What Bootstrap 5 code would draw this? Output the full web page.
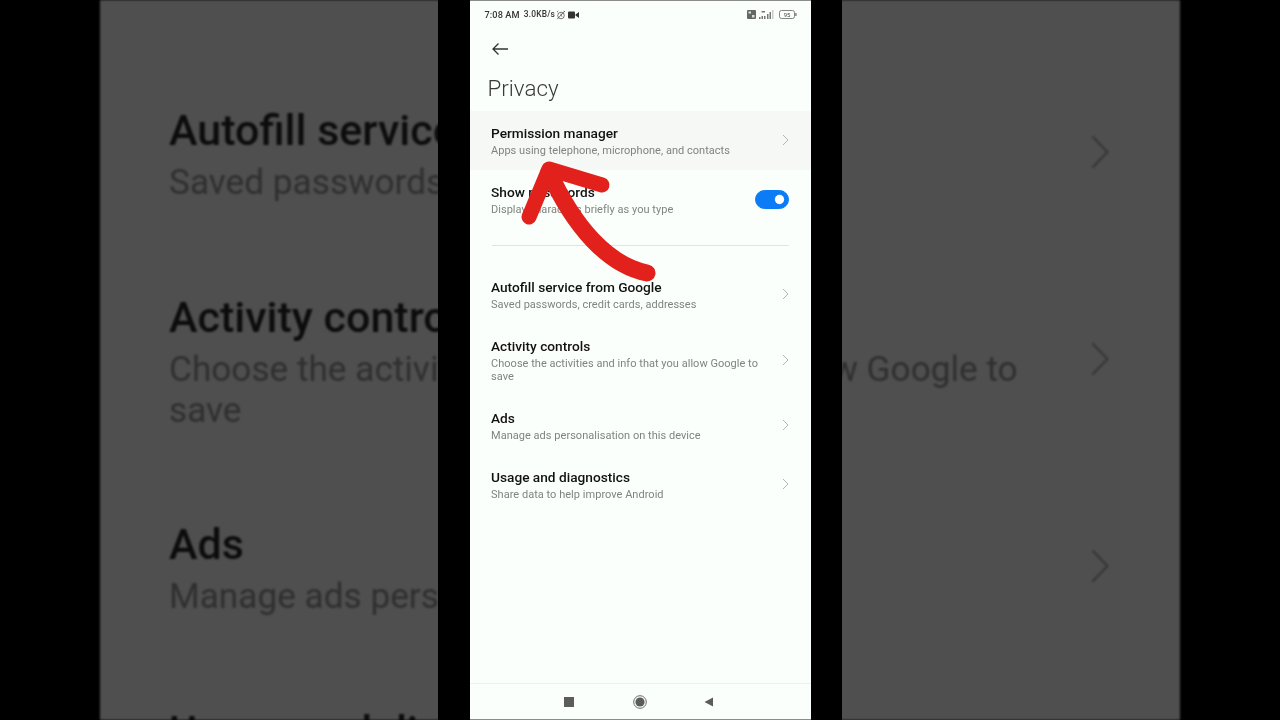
<!DOCTYPE html>
<html lang="en">
<head>
<meta charset="utf-8">
<title>Privacy</title>
<link href="https://cdn.jsdelivr.net/npm/bootstrap@5.3.0/dist/css/bootstrap.min.css" rel="stylesheet">
<style>
html,body{height:100%;margin:0;background:#000;overflow:hidden}
body{font-family:Roboto,"Liberation Sans",sans-serif}
.stage{position:relative;width:1280px;height:720px;background:#000;overflow:hidden}
.backdrop{margin:0 100px;height:720px;background:#4f4f4f;padding-top:60px;overflow:hidden;filter:blur(1px)}
.bd-row{padding:0 71px 0 69px}
.bd-row.one{height:187px}
.bd-row.two{height:227px}
.bd-text{width:860px;padding-top:43px}
.bd-title{font-size:43px;line-height:54px;font-weight:500;color:#0c0c0c}
.bd-sub{font-size:35.2px;line-height:41px;color:#2f2f2f;margin-top:5px}
.bd-chev{width:18px;height:34px;flex:none;color:#333;margin-bottom:4px}
.band{position:absolute;top:0;bottom:0;left:438px;width:404px;background:#000}
.phone{width:341px;height:720px;background:#fbfffb;border-top:1px solid #8c8c8c;border-bottom:1px solid #8c8c8c;position:relative;overflow:hidden;filter:blur(.3px)}
.statusline{height:27px;padding:0 14px 0 15px;color:#333}
.st-time{font-size:9.2px;font-weight:500;letter-spacing:.1px}
.st-speed{font-size:8.4px;font-weight:500;margin-left:4px;letter-spacing:.2px}
.st-alarm{margin-left:1px}
.st-cam{margin-left:2px}
.st-sig{margin-left:3px}
.backbar{height:41px;padding-left:21px}
.pagehead{font-size:22.4px;font-weight:300;color:#3a3a3a;line-height:28px;padding-left:18px;height:42px;margin:0;padding-top:5px}
.setlist{--bs-list-group-bg:transparent;--bs-list-group-border-width:0;border-radius:0}
.setrow{height:59px;padding:13px 22px 0 21.500px;background:transparent;color:#111}
.setrow.tall{height:72px}
.setrow.hi{background:#f5f8f5}
.set-title{font-size:13.700px;line-height:18px;font-weight:500;color:#111}
.set-sub{font-size:11px;line-height:13px;color:#808480;margin-top:2px;letter-spacing:.03px}
.set-main{width:272px}
.chev{width:7px;height:12px;flex:none;color:#b4b8b4;margin-top:10px}
.setrow.tall .chev{margin-top:17px}
.sep{height:36px;padding:16px 22px 0}
.sep hr{margin:0;border-color:#e0e4e0;opacity:1}
.navline{margin-top:auto;height:36px;border-top:1px solid #eef1ee;gap:59px}
.nav-back{margin-left:-2px;margin-right:2px}
.phone-col{height:100%}
.form-switch .toggle-in{width:34px;height:19px;margin:7px 0 0;float:none;background-color:#0b7cf5;border-color:#0b7cf5;box-shadow:none;background-image:url("data:image/svg+xml,%3csvg xmlns='http://www.w3.org/2000/svg' viewBox='-4 -4 8 8'%3e%3ccircle r='2.2' fill='%23fff'/%3e%3c/svg%3e")}
.form-switch.tog{padding:0;min-height:0;margin:0}
.arrowmark{position:absolute;left:0;top:0;width:341px;height:720px;pointer-events:none}
</style>
</head>
<body>
<main class="stage">
  <section class="backdrop" aria-hidden="true">
    <div class="bd-row one d-flex justify-content-between align-items-center">
      <div class="bd-text align-self-start"><div class="bd-title">Autofill service from Google</div><div class="bd-sub">Saved passwords, credit cards, addresses</div></div>
      <svg class="bd-chev" viewBox="0 0 18 34"><path d="M1.500 1.500 16.500 17 1.500 32.500" fill="none" stroke="currentColor" stroke-width="1.800"/></svg>
    </div>
    <div class="bd-row two d-flex justify-content-between align-items-center">
      <div class="bd-text align-self-start"><div class="bd-title">Activity controls</div><div class="bd-sub">Choose the activities and info that you allow Google to save</div></div>
      <svg class="bd-chev" viewBox="0 0 18 34"><path d="M1.500 1.500 16.500 17 1.500 32.500" fill="none" stroke="currentColor" stroke-width="1.800"/></svg>
    </div>
    <div class="bd-row one d-flex justify-content-between align-items-center">
      <div class="bd-text align-self-start"><div class="bd-title">Ads</div><div class="bd-sub">Manage ads personalisation on this device</div></div>
      <svg class="bd-chev" viewBox="0 0 18 34"><path d="M1.500 1.500 16.500 17 1.500 32.500" fill="none" stroke="currentColor" stroke-width="1.800"/></svg>
    </div>
    <div class="bd-row one d-flex justify-content-between align-items-center">
      <div class="bd-text align-self-start"><div class="bd-title">Usage and diagnostics</div><div class="bd-sub">Share data to help improve Android</div></div>
      <svg class="bd-chev" viewBox="0 0 18 34"><path d="M1.500 1.500 16.500 17 1.500 32.500" fill="none" stroke="currentColor" stroke-width="1.800"/></svg>
    </div>
  </section>
  <div class="band d-flex justify-content-center">
    <div class="phone">
      <div class="phone-col d-flex flex-column">
        <div class="statusline d-flex align-items-center">
          <span class="st-time">7:08 AM</span>
          <span class="st-speed">3.0KB/s</span>
          <svg class="st-alarm" width="10" height="10" viewBox="0 0 10 10" fill="none" stroke="#555" stroke-width=".8"><circle cx="5" cy="5.500" r="3.300"/><path d="M5 3.500v2l1.300.8M1 2 2.300 1M9 2 7.700 1M1.200 9.200 8.800 1"/></svg>
          <svg class="st-cam" width="11" height="8" viewBox="0 0 11 8"><rect x="0" y="0.500" width="7" height="7" rx="1" fill="#333"/><path d="M7.500 3.500 11 1v6L7.500 4.500z" fill="#333"/></svg>
          <svg class="ms-auto" width="9" height="9" viewBox="0 0 9 9"><rect width="9" height="9" rx="1" fill="#666"/><rect x="1.500" y="1.500" width="2.500" height="2" fill="#ddd"/><rect x="5" y="5" width="2.500" height="2.500" fill="#ddd"/></svg>
          <svg class="st-sig" width="16" height="9" viewBox="0 0 16 9"><g fill="#777"><rect x="0" y="7" width="1.500" height="2"/><rect x="2.500" y="6" width="1.500" height="3"/><rect x="5" y="6" width="1.500" height="3"/><rect x="8" y="4" width="1.500" height="5"/><rect x="10.500" y="2" width="1.500" height="7"/><rect x="13" y="0" width="1.500" height="9" fill="#ccc"/><rect x="2.500" y="1" width="3.500" height="1.500"/></g></svg>
          <svg class="ms-1" width="18" height="9" viewBox="0 0 18 9"><rect x=".5" y=".5" width="15" height="8" rx="2" fill="none" stroke="#666" stroke-width=".8"/><rect x="16.300" y="3" width="1.200" height="3" fill="#666"/><text x="8" y="6.700" font-size="6" text-anchor="middle" fill="#444" font-family="Roboto,sans-serif">95</text></svg>
        </div>
        <div class="backbar d-flex align-items-center">
          <svg width="18" height="14" viewBox="0 0 18 14" fill="none" stroke="#333" stroke-width="1.300"><path d="M17 7H2M7.500 1.500 2 7l5.500 5.500"/></svg>
        </div>
        <h1 class="pagehead">Privacy</h1>
        <div class="list-group list-group-flush setlist">
          <a class="list-group-item setrow hi d-flex justify-content-between" href="#">
            <div class="set-main"><div class="set-title">Permission manager</div><div class="set-sub">Apps using telephone, microphone, and contacts</div></div>
            <svg class="chev" viewBox="0 0 7 12"><path d="M1 1l5 5-5 5" fill="none" stroke="currentColor" stroke-width="1"/></svg>
          </a>
          <div class="list-group-item setrow d-flex justify-content-between">
            <div class="set-main"><div class="set-title">Show passwords</div><div class="set-sub">Display characters briefly as you type</div></div>
            <div class="form-check form-switch tog"><input class="form-check-input toggle-in" type="checkbox" role="switch" checked aria-label="Show passwords"></div>
          </div>
        </div>
        <div class="sep"><hr></div>
        <div class="list-group list-group-flush setlist">
          <a class="list-group-item setrow d-flex justify-content-between" href="#">
            <div class="set-main"><div class="set-title">Autofill service from Google</div><div class="set-sub">Saved passwords, credit cards, addresses</div></div>
            <svg class="chev" viewBox="0 0 7 12"><path d="M1 1l5 5-5 5" fill="none" stroke="currentColor" stroke-width="1"/></svg>
          </a>
          <a class="list-group-item setrow tall d-flex justify-content-between" href="#">
            <div class="set-main"><div class="set-title">Activity controls</div><div class="set-sub">Choose the activities and info that you allow Google to save</div></div>
            <svg class="chev" viewBox="0 0 7 12"><path d="M1 1l5 5-5 5" fill="none" stroke="currentColor" stroke-width="1"/></svg>
          </a>
          <a class="list-group-item setrow d-flex justify-content-between" href="#">
            <div class="set-main"><div class="set-title">Ads</div><div class="set-sub">Manage ads personalisation on this device</div></div>
            <svg class="chev" viewBox="0 0 7 12"><path d="M1 1l5 5-5 5" fill="none" stroke="currentColor" stroke-width="1"/></svg>
          </a>
          <a class="list-group-item setrow d-flex justify-content-between" href="#">
            <div class="set-main"><div class="set-title">Usage and diagnostics</div><div class="set-sub">Share data to help improve Android</div></div>
            <svg class="chev" viewBox="0 0 7 12"><path d="M1 1l5 5-5 5" fill="none" stroke="currentColor" stroke-width="1"/></svg>
          </a>
        </div>
        <nav class="navline d-flex align-items-center justify-content-center">
          <svg width="10" height="10" viewBox="0 0 10 10"><rect width="10" height="10" fill="#5c5c5c"/></svg>
          <svg width="14" height="14" viewBox="0 0 14 14"><circle cx="7" cy="7" r="6.300" fill="none" stroke="#6a6a6a" stroke-width="1"/><circle cx="7" cy="7" r="4.600" fill="#5c5c5c"/></svg>
          <svg class="nav-back" width="10" height="10" viewBox="0 0 10 10"><path d="M9 .5v9L.5 5z" fill="#5c5c5c"/></svg>
        </nav>
      </div>
      <svg class="arrowmark" viewBox="0 0 341 720" aria-hidden="true">
        <path d="M177 272C138 264 104 226 79 171" fill="none" stroke="#e2211c" stroke-width="17" stroke-linecap="round"/>
        <path d="M59 216 79 168 132 184" fill="none" stroke="#e2211c" stroke-width="15" stroke-linecap="round" stroke-linejoin="round"/>
      </svg>
    </div>
  </div>
</main>
<script src="https://cdn.jsdelivr.net/npm/bootstrap@5.3.0/dist/js/bootstrap.bundle.min.js"></script>
</body>
</html>
